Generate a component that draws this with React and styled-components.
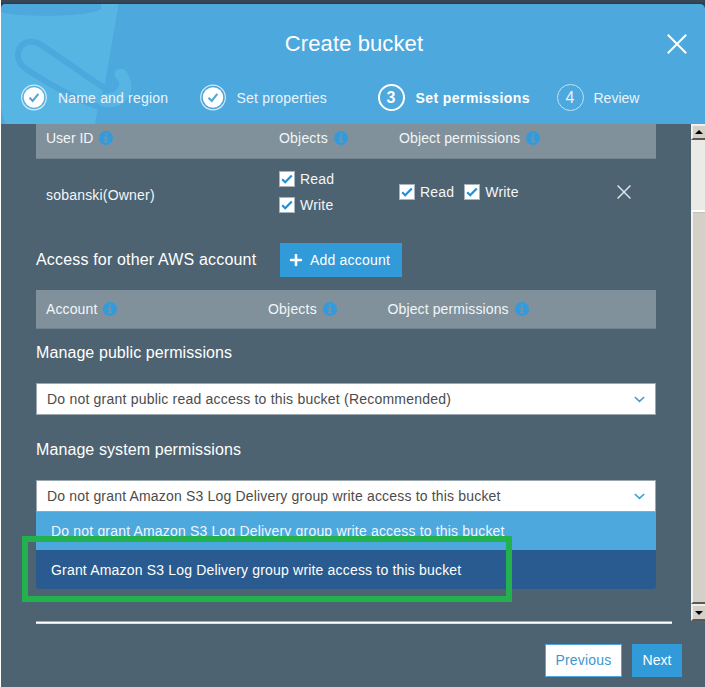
import React from "react";
import styled, { createGlobalStyle } from "styled-components";
import { FaPlus } from "react-icons/fa";

const Global = createGlobalStyle`
  * { box-sizing: border-box; }
  body { margin: 0; background: #fff; font-family: "Liberation Sans", Arial, sans-serif; font-size: 14px; overflow: hidden; }
  button { font: inherit; border-radius: 0; padding: 0; margin: 0; }
`;

const Page = styled.div`
  width: 705px;
  height: 687px;
  padding-left: 1px;
  background: #fff;
`;
const Dialog = styled.div`
  height: 687px;
  display: flex;
  flex-direction: column;
  background: #4d6371;
`;
const TopStrip = styled.div`
  height: 4px;
  flex: none;
  background: linear-gradient(#384755 0 2px, #2d3d4a 3px);
`;
const HeaderBack = styled.div`
  flex: none;
  background: #2d4657;
`;
const Header = styled.header`
  position: relative;
  height: 120px;
  overflow: hidden;
  border-radius: 5px 5px 0 0;
  background: #4da8dd;
  color: #fff;
`;
const BucketArt = styled.svg`
  position: absolute;
  left: 0;
  top: 0;
`;
const TitleRow = styled.div`
  position: relative;
  height: 80px;
  display: grid;
  grid-template-columns: 1fr auto 1fr;
  align-items: center;
  padding-right: 18px;
`;
const Title = styled.h1`
  margin: 0 0 1px 20px;
  font-size: 22px;
  line-height: 26px;
  font-weight: 400;
  letter-spacing: 0.1px;
`;
const CloseButton = styled.button`
  justify-self: end;
  display: flex;
  border: 0;
  background: none;
  color: ${(p) => p.$color || "#fff"};
`;
const Steps = styled.ol`
  position: relative;
  list-style: none;
  margin: 0;
  padding: 0 0 0 19px;
  display: grid;
  grid-template-columns: 178.5px 179px 179px 1fr;
`;
const Step = styled.li`
  height: 27px;
  display: flex;
  align-items: center;
  gap: ${(p) => (p.$current ? 11 : 10)}px;
  font-weight: ${(p) => (p.$current ? 700 : 400)};
  color: ${(p) => (p.$current ? "#fff" : "#e8f4fc")};
  letter-spacing: ${(p) => p.$track || 0}px;
  white-space: nowrap;
`;
const StepNumber = styled.span`
  width: 27px;
  height: 27px;
  flex: none;
  display: grid;
  place-items: center;
  border-radius: 50%;
  border: ${(p) => (p.$current ? "2px solid #fff" : "1.5px solid #c4e1f4")};
  font-size: 16px;
  letter-spacing: 0;
`;
const Scroller = styled.div`
  height: 497px;
  flex: none;
  display: grid;
  grid-template-columns: 655px 35px 14px;
`;
const Content = styled.main`
  padding-left: 35px;
  color: #f3f6f8;
`;
const TableHead = styled.div`
  height: ${(p) => p.$h}px;
  padding: 0 10px ${(p) => p.$lift}px;
  display: grid;
  grid-template-columns: ${(p) => p.$cols};
  align-items: center;
  background: #80919c;
  box-shadow: inset 0 -1px #71838f;
`;
const HeadCell = styled.div`
  display: flex;
  align-items: center;
  gap: 6px;
  white-space: nowrap;
  letter-spacing: ${(p) => p.$track || 0}px;
`;
const OwnerRow = styled.div`
  height: 84px;
  padding: 11px 10px 0;
  display: grid;
  grid-template-columns: 233px 120px 218px auto;
`;
const Owner = styled.span`
  margin-top: 17px;
  letter-spacing: 0.2px;
`;
const ObjectChecks = styled.div`
  display: flex;
  flex-direction: column;
  gap: 8px;
`;
const PermissionChecks = styled.div`
  display: flex;
  align-items: flex-start;
  gap: 10px;
  margin-top: 13px;
`;
const Check = styled.label`
  height: 18px;
  display: flex;
  align-items: center;
  gap: 5px;
  letter-spacing: 0.2px;
`;
const Box = styled.span`
  width: 16px;
  height: 16px;
  display: grid;
  place-items: center;
  background: #fff;
  border: 1px solid #a7b4bd;
`;
const RemoveSlot = styled.div`
  padding-top: 15px;
  display: flex;
  align-items: flex-start;
`;
const AccessRow = styled.div`
  height: 34px;
  display: grid;
  grid-template-columns: 244px 122px;
  align-items: center;
`;
const SectionLabel = styled.h2`
  margin: 0;
  font-size: 16px;
  line-height: 20px;
  font-weight: 400;
  white-space: nowrap;
  color: #fff;
  letter-spacing: ${(p) => p.$track || 0}px;
  padding-top: ${(p) => p.$top || 0}px;
  padding-bottom: ${(p) => p.$bottom || 0}px;
`;
const AddButton = styled.button`
  height: 34px;
  display: flex;
  align-items: center;
  padding: 0 0 1px 9px;
  gap: 7px;
  border: 0;
  background: #319ad9;
  color: #fff;
  letter-spacing: 0.2px;
`;
const AccountTable = styled.section`
  margin-top: 13px;
`;
const Select = styled.div`
  height: 32px;
  padding: 0 10px 0 10px;
  display: flex;
  align-items: center;
  justify-content: space-between;
  background: #fff;
  border: 1px solid #9ba7ae;
  color: #4c4c4c;
  white-space: nowrap;
  letter-spacing: ${(p) => p.$track}px;
`;
const Options = styled.div`
  border-radius: 0 0 3px 3px;
  overflow: hidden;
  letter-spacing: 0.18px;
`;
const Option = styled.div`
  height: ${(p) => (p.$active ? 39 : 38)}px;
  padding-left: 15px;
  display: flex;
  align-items: center;
  white-space: nowrap;
  background: ${(p) => (p.$active ? "#295a90" : "#4da8dd")};
  color: ${(p) => (p.$active ? "#fff" : "#eef7fd")};
`;
const Highlight = styled.div`
  position: absolute;
  left: 22px;
  top: 536px;
  width: 490px;
  height: 66px;
  border: 6px solid #22b14c;
`;
const ScrollBar = styled.div`
  grid-column: 3;
  height: 497px;
  display: flex;
  flex-direction: column;
  overflow: hidden;
  background: #ebeae6;
`;
const ScrollArrow = styled.div`
  height: ${(p) => p.$h}px;
  flex: none;
  display: grid;
  place-items: center;
  background: #d4d0c8;
  border-style: solid;
  border-width: 2px 0 2px 2px;
  border-color: #f1efeb #fff #5a5955 #f1efeb;
`;
const Track = styled.div`
  height: 70px;
  flex: none;
`;
const Thumb = styled.div`
  flex: 1;
  background: #d4d0c8;
  border-left: 2px solid #f4f2ee;
  border-top: 2px solid #fff;
  border-bottom: 2px solid #5a5955;
  box-shadow: inset 0 1px #c5c1b9;
`;
const Footer = styled.footer`
  padding: 0 23px 0 35px;
`;
const Rule = styled.div`
  height: 3px;
  width: 636px;
  background: linear-gradient(#9dabb4 0 1px, #fff 1px 2px, #dce1e4 2px 3px);
`;
const Actions = styled.div`
  display: flex;
  justify-content: flex-end;
  gap: 10px;
  padding-top: 20px;
`;
const Action = styled.button`
  width: ${(p) => (p.$primary ? 50 : 77)}px;
  height: 33px;
  padding-bottom: 1px;
  border: 1px solid ${(p) => (p.$primary ? "#319ad9" : "#4da8dd")};
  background: ${(p) => (p.$primary ? "#319ad9" : "#fff")};
  color: ${(p) => (p.$primary ? "#fff" : "#4096cf")};
  letter-spacing: ${(p) => (p.$primary ? 0 : 0.2)}px;
`;

const Cross = ({ size, weight }) => (
  <svg width={size} height={size} viewBox="0 0 20 20" fill="none" stroke="currentColor" strokeWidth={weight}>
    <path d="M.8 .8 19.2 19.2M19.2 .8 .8 19.2" />
  </svg>
);

const Done = () => (
  <svg width="28" height="27" viewBox="0 0 28 28" fill="none">
    <circle cx="14" cy="14" r="12.8" stroke="#d4eaf7" strokeWidth="1.2" />
    <circle cx="14" cy="14" r="10.6" fill="#fff" />
    <path d="m9.4 14.2 3.3 3.4 5.8-7.4" stroke="#4da8dd" strokeWidth="2.2" />
  </svg>
);

const Info = () => (
  <svg width="14" height="14" viewBox="0 0 14 14">
    <circle cx="7" cy="7" r="7" fill="#319bdc" />
    <path d="M5.700 2.200H8.200V4.300H5.700ZM4.800 5.500H8.200V9.800H9.300V11.500H4.800V9.800H5.900V7.200H4.800Z" fill="#6b95b1" />
  </svg>
);

const Chevron = () => (
  <svg width="11" height="7" viewBox="0 0 11 7" fill="none" stroke="#3b9fda" strokeWidth="1.6">
    <path d="M.8 1 5.5 5.4 10.2 1" />
  </svg>
);

const CheckItem = ({ children }) => (
  <Check>
    <Box>
      <svg width="12" height="12" viewBox="0 0 12 12" fill="none" stroke="#1e8fdb" strokeWidth="2.2">
        <path d="m1.2 6.2 3 3 6.6-6.8" />
      </svg>
    </Box>
    {children}
  </Check>
);

const Head = ({ children, track = 0.12 }) => (
  <HeadCell $track={track}>
    {children}
    <Info />
  </HeadCell>
);

const Bucket = () => (
  <BucketArt width="140" height="120" viewBox="1 4 140 120" fill="none">
    <path d="M1 4H118.500L105 84 98 108 95 124H5L1 108Z" fill="#57b5e4" />
    <path d="M1 4H101V9C91 17 18 18 1 12Z" fill="#4da8dd" />
    <path
      d="M114.500 74C115 69 121 67 126 71C133 81 134 94 124 102C117 109 106 108 96 104L92 92C103 96 119 94 119 84C119 80 115 79 114.500 74Z"
      fill="#57b5e4"
    />
    <path
      d="M99 107 C72 98 48 83 29 71 C17 64 15 53 22 45 C28 40 36 41 43 46 L101 86 C108 91 115 88 117 81"
      stroke="#4da8dd"
      strokeWidth="6"
    />
  </BucketArt>
);

export default function App() {
  return (
    <Page>
      <Global />
      <Dialog>
        <TopStrip />
        <HeaderBack>
          <Header>
            <Bucket />
            <TitleRow>
              <span />
              <Title>Create bucket</Title>
              <CloseButton aria-label="Close">
                <Cross size={20} weight={2} />
              </CloseButton>
            </TitleRow>
            <Steps>
              <Step $track={0.18}><Done />Name and region</Step>
              <Step $track={0.23}><Done />Set properties</Step>
              <Step $current $track={0.42}><StepNumber $current>3</StepNumber>Set permissions</Step>
              <Step><StepNumber>4</StepNumber>Review</Step>
            </Steps>
          </Header>
        </HeaderBack>
        <Scroller>
          <Content>
            <TableHead $h={35} $lift={7} $cols="233px 120px 1fr">
              <Head track={0}>User ID</Head>
              <Head track={0.2}>Objects</Head>
              <Head>Object permissions</Head>
            </TableHead>
            <OwnerRow>
              <Owner>sobanski(Owner)</Owner>
              <ObjectChecks>
                <CheckItem>Read</CheckItem>
                <CheckItem>Write</CheckItem>
              </ObjectChecks>
              <PermissionChecks>
                <CheckItem>Read</CheckItem>
                <CheckItem>Write</CheckItem>
              </PermissionChecks>
              <RemoveSlot>
                <CloseButton $color="#e3e8eb" aria-label="Remove">
                  <Cross size={14} weight={2} />
                </CloseButton>
              </RemoveSlot>
            </OwnerRow>
            <AccessRow>
              <SectionLabel $track={0.17}>Access for other AWS account</SectionLabel>
              <AddButton><FaPlus size={14} />Add account</AddButton>
            </AccessRow>
            <AccountTable>
              <TableHead $h={39} $lift={1} $cols="222px 119.500px 1fr">
                <Head>Account</Head>
                <Head track={0.2}>Objects</Head>
                <Head>Object permissions</Head>
              </TableHead>
            </AccountTable>
            <SectionLabel $track={0.09} $top={14} $bottom={20}>Manage public permissions</SectionLabel>
            <Select $track={0.21}>Do not grant public read access to this bucket (Recommended)<Chevron /></Select>
            <SectionLabel $track={0.09} $top={25} $bottom={20}>Manage system permissions</SectionLabel>
            <Select $track={0.18}>Do not grant Amazon S3 Log Delivery group write access to this bucket<Chevron /></Select>
            <Options>
              <Option>Do not grant Amazon S3 Log Delivery group write access to this bucket</Option>
              <Option $active>Grant Amazon S3 Log Delivery group write access to this bucket</Option>
            </Options>
          </Content>
          <ScrollBar>
            <ScrollArrow $h={16}>
              <svg width="8" height="4"><path d="M4 0 8 4H0Z" fill="#000" /></svg>
            </ScrollArrow>
            <Track />
            <Thumb />
            <ScrollArrow $h={17}>
              <svg width="8" height="4"><path d="M0 0H8L4 4Z" fill="#000" /></svg>
            </ScrollArrow>
          </ScrollBar>
        </Scroller>
        <Footer>
          <Rule />
          <Actions>
            <Action>Previous</Action>
            <Action $primary>Next</Action>
          </Actions>
        </Footer>
      </Dialog>
      <Highlight />
    </Page>
  );
}
